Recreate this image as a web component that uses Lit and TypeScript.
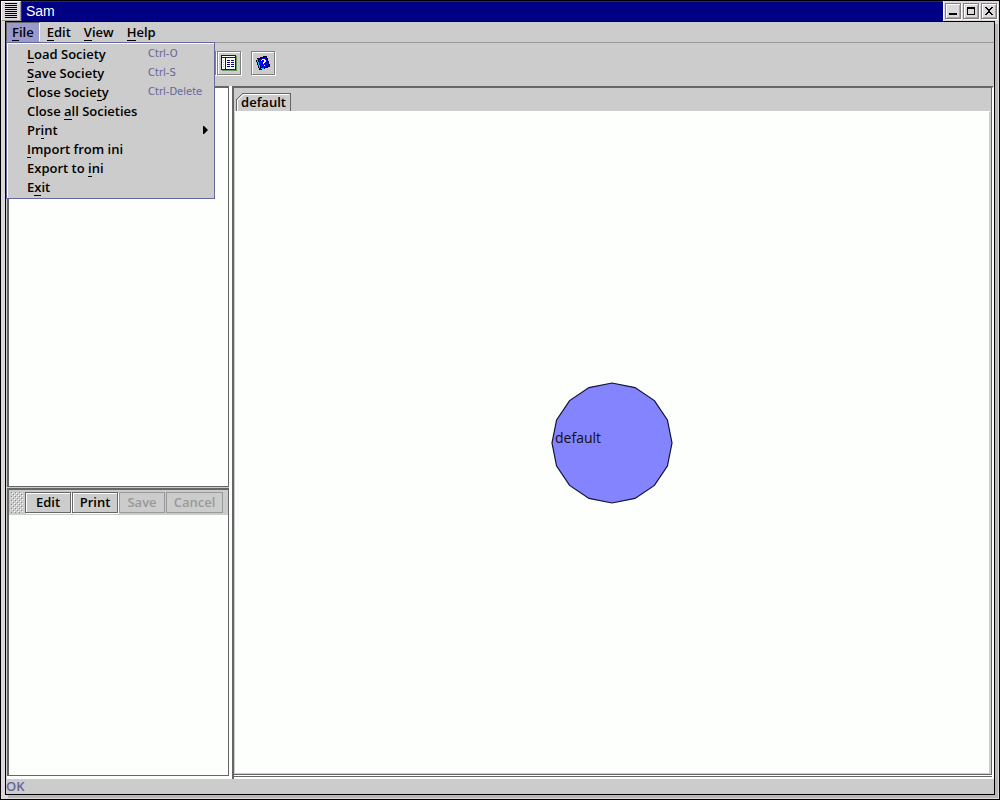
import { LitElement, html, css, svg, nothing } from "lit";
import { customElement, state } from "lit/decorators.js";
import { classMap } from "lit/directives/class-map.js";

interface Entry {
  label: string;
  key: number;
  accel?: string;
  sub?: boolean;
}

const MENUS = ["File", "Edit", "View", "Help"];

const FILE_MENU: Entry[] = [
  { label: "Load Society", key: 0, accel: "Ctrl-O" },
  { label: "Save Society", key: 0, accel: "Ctrl-S" },
  { label: "Close Society", key: 11, accel: "Ctrl-Delete" },
  { label: "Close all Societies", key: 6 },
  { label: "Print", key: 2, sub: true },
  { label: "Import from ini", key: 0 },
  { label: "Export to ini", key: 10 },
  { label: "Exit", key: 1 },
];

const mnemonic = (text: string, i: number) =>
  html`${text.slice(0, i)}<span class="key">${text[i]}</span>${text.slice(i + 1)}`;

const polygon = (n: number, c: number, r: number) =>
  Array.from({ length: n }, (_, i) => {
    const a = (i * 2 * Math.PI) / n;
    return `${(c + r * Math.sin(a)).toFixed(1)},${(c - r * Math.cos(a)).toFixed(1)}`;
  }).join(" ");

@customElement("app-root")
export class AppRoot extends LitElement {
  @state() private open = true;

  static styles = css`
    :host {
      display: block;
      height: 100vh;
      font: 600 13px/16px "Open Sans", "Noto Sans", sans-serif;
      color: #000;
      --face: #cccccc;
      --dark: #666666;
      --mid: #999999;
      --paper: #fcfffc;
      --violet: #666699;
    }
    * { box-sizing: border-box; }
    button {
      font: inherit;
      color: inherit;
      margin: 0;
      padding: 0;
      border: 0;
      border-radius: 0;
      background: var(--face);
    }
    svg { display: block; }
    .key { box-shadow: 0 1px 0 #000; display: inline-block; line-height: 15px; }
    .frame {
      height: 100%;
      display: flex;
      flex-direction: column;
      border: 1px solid #000;
      background: #dcd8dc;
    }
    .title {
      display: flex;
      height: 20px;
      flex: none;
      background: #000084;
      color: #fff;
    }
    .title h1 {
      flex: 1;
      margin: 0;
      padding-left: 4px;
      border-left: 1px solid #2020c0;
      border-top: 1px solid #2020c0;
      font: 14px/19px "Liberation Sans", sans-serif;
    }
    .sysmenu {
      width: 20px;
      height: 20px;
      border: 1px solid #fff;
      border-right-color: var(--mid);
      border-bottom-color: var(--mid);
      background: #dcd8dc;
    }
    .winbtns {
      display: flex;
      gap: 2px;
      padding: 2px 2px 1px 1px;
      background: #dcd8dc;
      border-left: 1px solid #fff;
    }
    .winbtns button {
      width: 16px;
      height: 16px;
      border: 1px solid #808080;
      box-shadow: inset 1px 1px #fff, inset -1px -1px #a8a4a8, 1px 1px #fff;
      background: #dcd8dc;
    }
    .client {
      flex: 1;
      min-height: 0;
      display: flex;
      flex-direction: column;
      position: relative;
      border: 1px solid #000;
      margin: 0 4px 4px;
      background: var(--face);
      box-shadow: 3px 3px #bab6ba;
    }
    .menubar {
      display: flex;
      flex: none;
      gap: 1px;
      height: 21px;
      border-bottom: 1px solid var(--mid);
    }
    .menubar button { height: 20px; padding: 0 5px; border: 1px solid transparent; }
    .menubar button.on {
      background: #9999cc;
      border-color: var(--dark) #fff transparent var(--dark);
    }
    .popup {
      position: absolute;
      z-index: 2;
      left: 0;
      top: 20px;
      width: 209px;
      padding: 2px 0 1px;
      border: 1px solid #6666a0;
      box-shadow: inset 1px 1px #fff;
      background: var(--face);
    }
    .popup button {
      display: grid;
      grid-template-columns: 121px 1fr auto;
      align-items: center;
      width: 100%;
      height: 19px;
      padding: 0 5px 2px 20px;
      background: none;
      text-align: left;
      white-space: nowrap;
    }
    .accel { font: 10px/18px "DejaVu Sans", sans-serif; color: var(--violet); }
    .arrow { grid-column: 3; }
    .tools {
      display: flex;
      flex: none;
      height: 43px;
      padding: 8px 0 0 186px;
      gap: 1px;
    }
    .tools button {
      width: 24px;
      height: 24px;
      display: grid;
      place-items: center;
      border: 1px solid #808080;
      box-shadow: inset 1px 1px #fff, 1px 1px #fff;
    }
    .tools .apart { margin-left: 9px; }
    .body {
      flex: 1;
      min-height: 0;
      display: flex;
      margin-left: 1px;
    }
    .side {
      width: 225px;
      flex: none;
      display: flex;
      flex-direction: column;
      border-right: 3px solid #fff;
    }
    .tree, .detail {
      border: 1px solid var(--dark);
      border-left-width: 2px;
      background: var(--paper);
      box-shadow: inset -1px 0 #fff;
    }
    .tree { flex: 398; border-top-width: 2px; }
    .detail {
      flex: 285;
      margin-top: 1px;
      border-top-width: 2px;
      margin-bottom: 3px;
      box-shadow: 0 3px #fff;
    }
    .detail .bar {
      display: flex;
      height: 25px;
      padding: 2px 5px 2px 2px;
      gap: 1px;
      background: var(--face);
    }
    .grip {
      width: 12px;
      height: 21px;
      margin-right: 1px;
      background:
        conic-gradient(from 270deg at 1px 1px, #888 90deg, transparent 0) 0 0 / 4px 4px,
        conic-gradient(from 270deg at 1px 1px, #fff 90deg, transparent 0) 1px 1px / 4px 4px,
        conic-gradient(from 270deg at 1px 1px, #888 90deg, transparent 0) 2px 2px / 4px 4px,
        conic-gradient(from 270deg at 1px 1px, #fff 90deg, transparent 0) 3px 3px / 4px 4px;
    }
    .bar button {
      flex: 1 0 auto;
      min-width: 46px;
      height: 21px;
      padding: 0 4px 2px;
      border: 1px solid var(--dark);
      box-shadow: inset 1px 1px #fff, 1px 1px #fff;
    }
    .bar button:disabled { color: var(--mid); border-color: var(--mid); box-shadow: none; }
    .main {
      flex: 1;
      min-width: 0;
      display: flex;
      flex-direction: column;
      border: 2px solid var(--dark);
      border-right: 2px solid #fff;
      border-bottom: 0;
    }
    .tabs { height: 23px; padding: 5px 0 0 2px; flex: none; }
    .tab {
      position: relative;
      display: block;
      height: 18px;
      width: 55px;
      background: none;
    }
    .tab svg { position: absolute; inset: 0; }
    .tab span { position: relative; }
    .canvas {
      flex: 1;
      min-height: 0;
      display: grid;
      place-items: center;
      background: var(--paper);
      border: 1px solid #fff;
      border-left-color: var(--face);
      border-right: 2px solid var(--face);
      border-bottom: 1px solid var(--face);
    }
    .sheet {
      flex: 1;
      min-height: 0;
      display: flex;
      flex-direction: column;
      border-right: 1px solid var(--dark);
      border-bottom: 1px solid var(--dark);
    }
    .foot { height: 4px; border-top: 1px solid #fff; border-bottom: 2px solid #fff; background: var(--dark); }
    .node text { font: 14px "Open Sans", "Noto Sans", sans-serif; }
    .status { flex: none; height: 15px; line-height: 14px; color: var(--violet); }
  `;

  private menuItem(e: Entry) {
    return html`<button role="menuitem">
      <span>${mnemonic(e.label, e.key)}</span>
      ${e.accel ? html`<span class="accel">${e.accel}</span>` : nothing}
      ${e.sub
        ? html`<svg class="arrow" width="6" height="8" viewBox="0 0 6 8"><path d="M0 0h1l4 4-4 4H0z" /></svg>`
        : nothing}
    </button>`;
  }

  private windowIcon(shape: unknown) {
    return html`<svg width="14" height="14" viewBox="0 0 14 14" shape-rendering="crispEdges">${shape}</svg>`;
  }

  render() {
    return html`
      <div class="frame">
        <header class="title">
          <button class="sysmenu" aria-label="Window menu">
            <svg width="18" height="18" shape-rendering="crispEdges">
              ${[0, 1, 2, 3, 4, 5, 6, 7].map((i) => svg`<path d="M3 ${1 + i * 2}h12v1H3z" />`)}
            </svg>
          </button>
          <h1>Sam</h1>
          <div class="winbtns">
            <button aria-label="Minimize">${this.windowIcon(svg`<path d="M3 9h8v2H3z" />`)}</button>
            <button aria-label="Maximize">
              ${this.windowIcon(svg`<path fill-rule="evenodd" d="M3 3h8v8H3zM4 5v5h6V5z" />`)}
            </button>
            <button aria-label="Close">
              ${this.windowIcon(
                svg`<path d="M3 3h2v1h1v1h2v-1h1v-1h2v1h-1v1h-1v1h-1v2h1v1h1v1h1v1h-2v-1h-1v-1h-2v1h-1v1h-2v-1h1v-1h1v-1h1v-2h-1v-1h-1v-1h-1z" />`
              )}
            </button>
          </div>
        </header>
        <main class="client">
          <nav class="menubar">
            ${MENUS.map(
              (m, i) => html`<button
                class=${classMap({ on: i === 0 && this.open })}
                @click=${() => { if (i === 0) this.open = !this.open; }}
              >${mnemonic(m, 0)}</button>`
            )}
          </nav>
          ${this.open ? html`<div class="popup" role="menu">${FILE_MENU.map((e) => this.menuItem(e))}</div>` : nothing}
          <div class="tools">
            <button aria-label="Tree"></button>
            <button aria-label="Table">
              <svg width="16" height="16" viewBox="0 0 16 16" shape-rendering="crispEdges">
                <path fill="#003300" d="M0 0h15v15H0z" />
                <path fill="#669966" d="M15 1h1v15H1v-1h14z" />
                <path fill="#fff" d="M1 1h13v1H1zM1 3h3v11H1zM5 3h9v11H5z" />
                <path fill="#99bb99" d="M2 5h1v1H2zM2 7h1v1H2zM2 9h1v1H2zM2 11h1v1H2z" />
                <path
                  fill="#000080"
                  d="M6 5h3v1H6zM10 5h3v1h-3zM6 7h3v1H6zM10 7h3v1h-3zM6 9h3v1H6zM10 9h3v1h-3zM6 11h3v1H6zM10 11h3v1h-3z"
                />
              </svg>
            </button>
            <button class="apart" aria-label="Help contents">
              <svg width="16" height="16" viewBox="0 0 16 16" shape-rendering="crispEdges">
                <path fill="#000044" d="M2 3h3v-1h3v-1h4v2h1v3h1v3h1v3h-2v1h-3v1h-3v1h-3v-2h-1v-3h-1v-3h-1z" />
                <path fill="#0000ff" d="M4 4h2v-1h3v-1h2v2h1v3h1v3h1v1h-2v1h-3v1h-3v-2h-1v-3h-1v-3h-1z" />
                <path fill="#00ccff" d="M2 4h1v3h1v3h1v3h-1v-3h-1v-3h-1zM6 13h3v1h-3z" />
                <path fill="#fff" d="M6 5h1v-1h3v1h1v2h-1v1h-1v1h-1v-2h1v-2h-2v1h-1zM9 10h1v1h-1z" />
              </svg>
            </button>
          </div>
          <div class="body">
            <aside class="side">
              <section class="tree" aria-label="Societies"></section>
              <section class="detail" aria-label="Details">
                <div class="bar">
                  <span class="grip"></span>
                  <button>Edit</button>
                  <button>Print</button>
                  <button disabled>Save</button>
                  <button disabled>Cancel</button>
                </div>
              </section>
            </aside>
            <section class="main">
              <div class="sheet">
                <div class="tabs" role="tablist">
                  <button class="tab" role="tab" aria-selected="true">
                    <svg width="55" height="18" viewBox="0 0 55 18" fill="none" shape-rendering="crispEdges">
                      <path stroke="#666" d="M.5 18V6.500l6-6h48V18" />
                      <path stroke="#fff" d="M1.500 18V7.500l6-6H53" />
                    </svg>
                    <span>default</span>
                  </button>
                </div>
                <div class="canvas">
                  <svg class="node" width="122" height="122" viewBox="0 0 122 122">
                    <polygon points=${polygon(16, 61, 60)} fill="#8484ff" stroke="#111133" stroke-width="1.2" />
                    <text x="4" y="61" fill="#111">default</text>
                  </svg>
                </div>
              </div>
              <div class="foot"></div>
            </section>
          </div>
          <footer class="status">OK</footer>
        </main>
      </div>
    `;
  }
}
